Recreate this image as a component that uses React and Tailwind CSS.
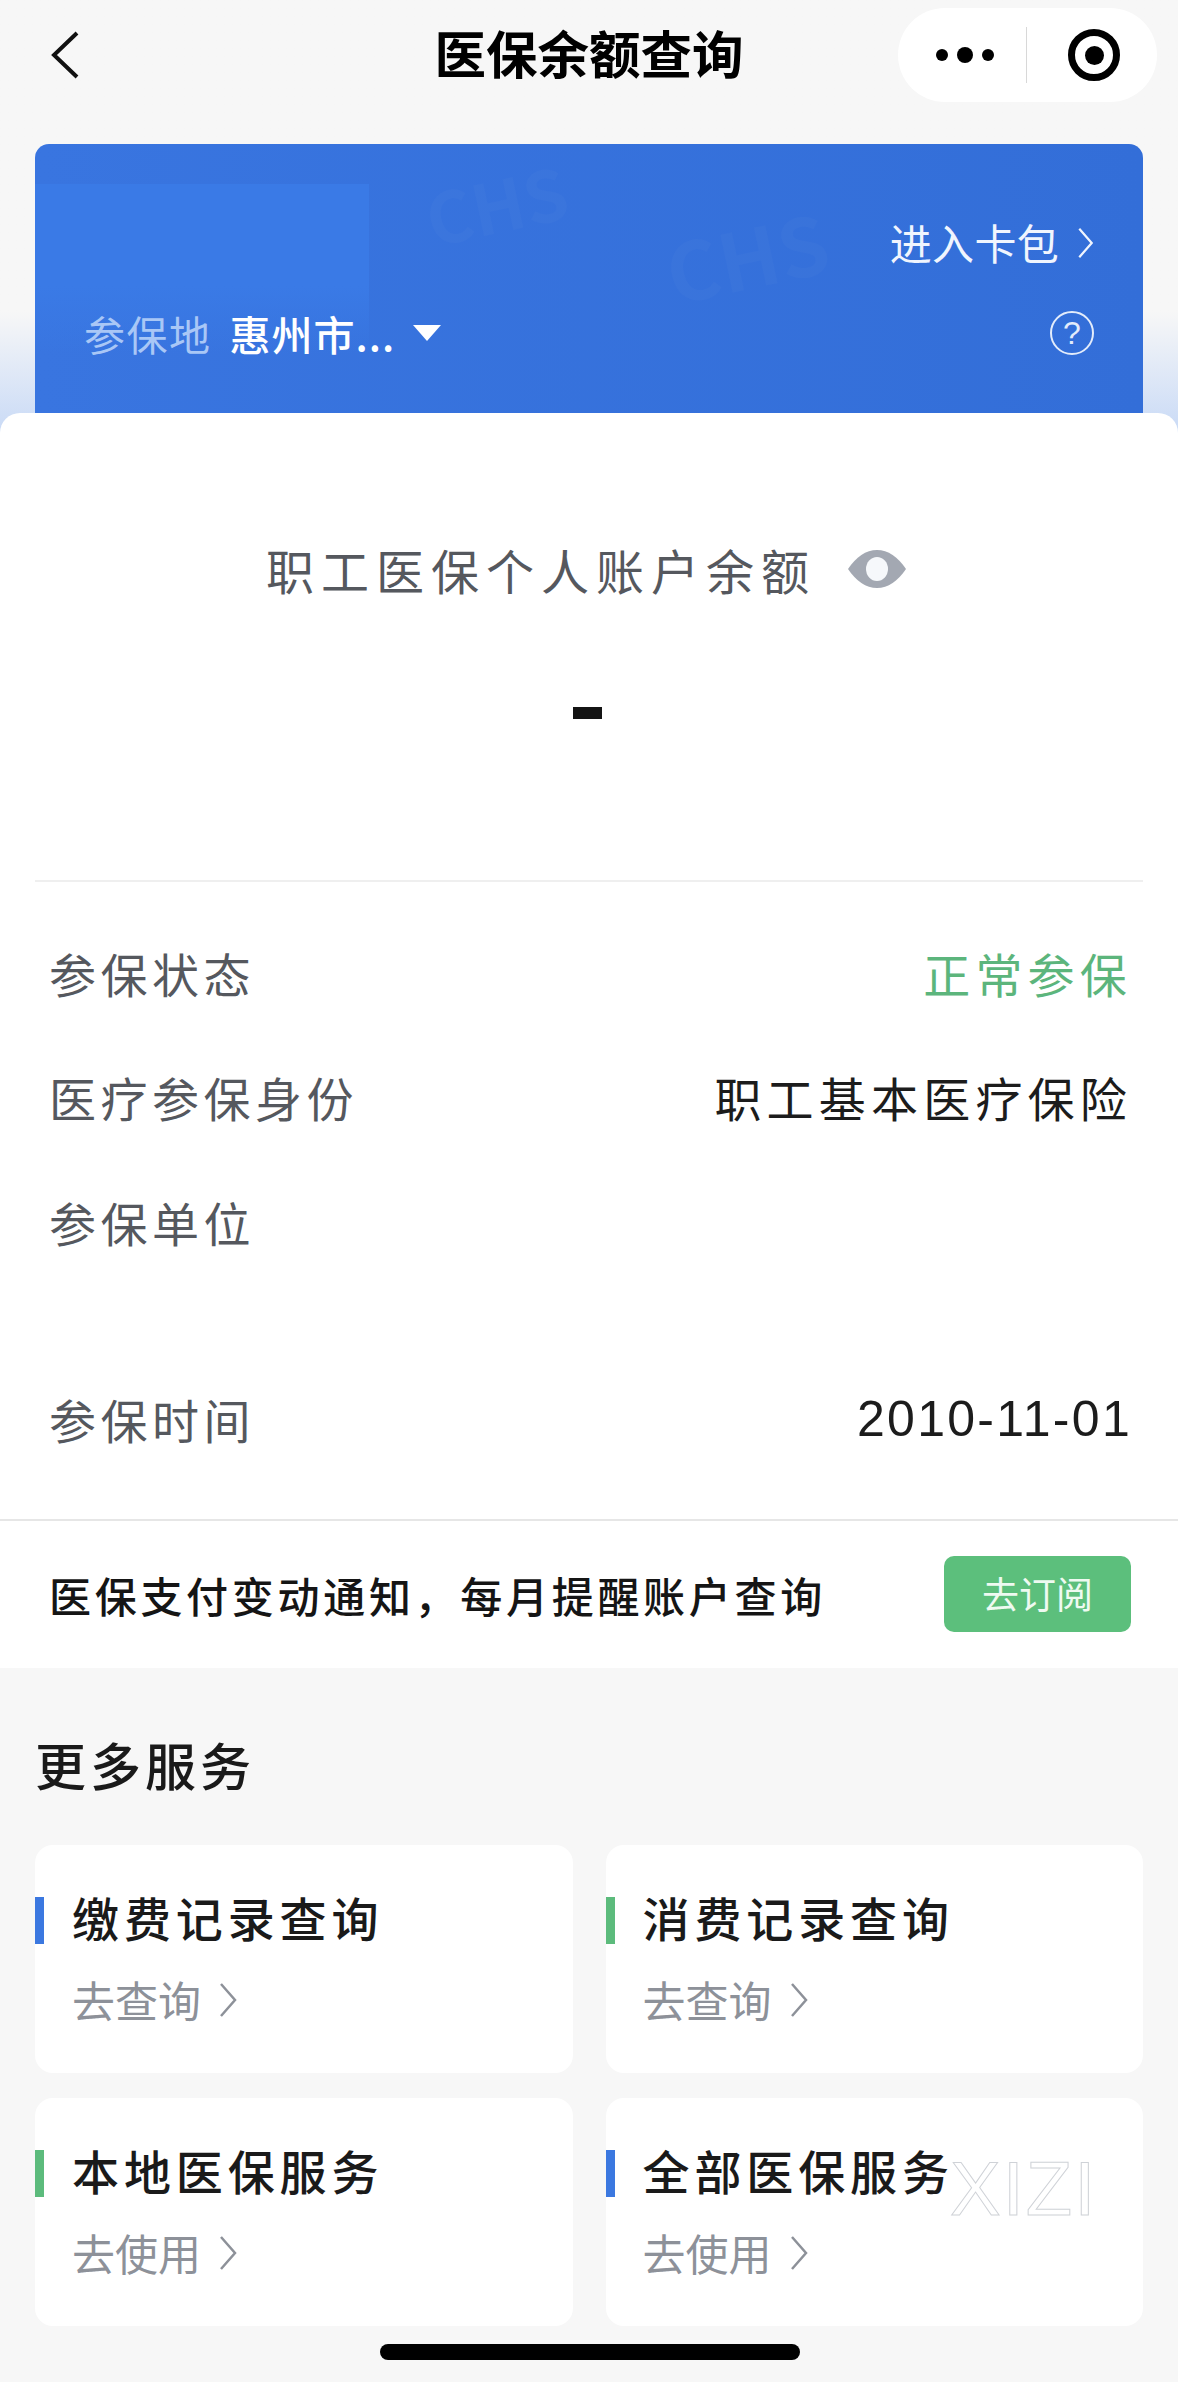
const cjk = "font-['Noto_Sans_CJK_SC','Noto_Sans',sans-serif]";

const infoRows = [
  { label: "参保状态", value: "正常参保", valueClass: "text-[#5cb57c] tracking-[5.2px]", height: "h-[123px]" },
  { label: "医疗参保身份", value: "职工基本医疗保险", valueClass: "text-[#1c1c1c] tracking-[5.2px]", height: "h-[125px]" },
  { label: "参保单位", value: "", valueClass: "", height: "h-[197px] pb-[72px]" },
  { label: "参保时间", value: "2010-11-01", valueClass: "text-[#1c1c1c] font-['Liberation_Sans',sans-serif] text-[50px] tracking-[2.3px]", height: "h-[125px]" },
];

const services = [
  { title: "缴费记录查询", action: "去查询", bar: "bg-[#3b78e0]" },
  { title: "消费记录查询", action: "去查询", bar: "bg-[#5cbb7c]" },
  { title: "本地医保服务", action: "去使用", bar: "bg-[#5cbb7c]" },
  { title: "全部医保服务", action: "去使用", bar: "bg-[#3b78e0]" },
];

function BackIcon() {
  return (
    <svg className="h-[48px] w-[30px]" viewBox="0 0 30 48" fill="none">
      <path d="M27 2 4 24l23 22" stroke="#111" strokeWidth="4" />
    </svg>
  );
}

function ThinChevron({ className, color }) {
  return (
    <svg className={className} viewBox="0 0 18 36" fill="none">
      <path d="M2 2l14 16L2 34" stroke={color} strokeWidth="2.5" />
    </svg>
  );
}

function Capsule() {
  return (
    <div className="flex h-[94px] w-[259px] items-center rounded-[47px] bg-white pl-[38px]">
      <div className="flex w-[58px] items-center justify-between">
        <span className="h-[12px] w-[12px] rounded-full bg-black" />
        <span className="h-[16px] w-[16px] rounded-full bg-black" />
        <span className="h-[12px] w-[12px] rounded-full bg-black" />
      </div>
      <span className="ml-[32px] h-[56px] w-px bg-[#d8d8d8]" />
      <span className="ml-[41px] flex h-[52px] w-[52px] items-center justify-center rounded-full border-[7px] border-black">
        <span className="h-[19px] w-[19px] rounded-full bg-black" />
      </span>
    </div>
  );
}

function HelpIcon() {
  return (
    <span className="flex h-[44px] w-[44px] items-center justify-center rounded-full border-2 border-[#e3ecfb] text-[32px] leading-none text-[#e3ecfb] font-['Liberation_Sans',sans-serif]">
      ?
    </span>
  );
}

function EyeIcon() {
  return (
    <svg className="h-[38px] w-[58px]" viewBox="0 0 58 38">
      <path d="M0 19C8 7 18 0 29 0s21 7 29 19c-8 12-18 19-29 19S8 31 0 19Z" fill="#a3a8b2" />
      <ellipse cx="29" cy="19" rx="11" ry="12" fill="#f6f8fb" />
    </svg>
  );
}

function InfoRow({ label, value, valueClass, height }) {
  return (
    <div className={`flex items-center justify-between pl-[49px] pr-[46px] text-[47px] tracking-[4.5px] ${height}`}>
      <span className="text-[#55585e]">{label}</span>
      {value && <span className={valueClass}>{value}</span>}
    </div>
  );
}

function ServiceCard({ title, action, bar }) {
  return (
    <div className="h-[228px] rounded-[18px] bg-white pt-[52px]">
      <div className="flex h-[47px] items-center">
        <span className={`h-[47px] w-[9px] ${bar}`} />
        <span className="mb-[9px] ml-[28px] text-[47px] font-medium leading-none tracking-[4.9px] text-[#1a1a1a]">{title}</span>
      </div>
      <div className="mt-[34px] flex items-center pl-[37px] text-[#8d9199]">
        <span className="text-[43px] leading-none">{action}</span>
        <ThinChevron className="ml-[18px] h-[36px] w-[18px]" color="#8d9199" />
      </div>
    </div>
  );
}

export default function App() {
  return (
    <div className={`relative min-h-[2382px] w-[1178px] overflow-hidden bg-[#f7f7f7] ${cjk}`}>
      <div className="bg-linear-to-b from-[#f7f7f7] from-[72%] to-[#c9daf6]">
        <header className="relative flex h-[144px] items-start justify-between pl-[50px] pr-[21px]">
          <div className="pt-[31px]">
            <BackIcon />
          </div>
          <h1 className="absolute inset-x-0 top-[22px] text-center text-[51.5px] font-bold leading-[60px] text-black">
            医保余额查询
          </h1>
          <div className="pt-[8px]">
            <Capsule />
          </div>
        </header>

        <section className="relative mx-[35px] h-[289px] overflow-hidden rounded-t-[14px] bg-linear-to-r from-[#3975e0] to-[#336ed8] text-white">
          <div className="absolute left-0 top-[40px] h-[170px] w-[334px] bg-linear-to-b from-[#3a7ae6] from-[60%] to-transparent" />
          <span className="absolute left-[390px] top-[24px] -rotate-12 text-[70px] font-bold leading-none text-white/[0.025]">CHS</span>
          <span className="absolute left-[630px] top-[70px] -rotate-12 text-[80px] font-bold leading-none text-white/[0.025]">CHS</span>
          <div className="relative flex h-[124px] items-end justify-end pr-[49px] pb-[1px] text-[42px] leading-[50px] tracking-[0.3px] text-[#f0f5fe]">
            <span>进入卡包</span>
            <ThinChevron className="mb-[8px] ml-[18px] h-[32px] w-[17px]" color="#f0f5fe" />
          </div>
          <div className="relative mt-[40px] flex h-[50px] items-center pl-[49px] pr-[49px]">
            <span className="text-[41px] leading-none tracking-[1.5px] text-[#a9c7f6]">参保地</span>
            <span className="ml-[18px] text-[41px] font-medium leading-none tracking-[1px]">惠州市...</span>
            <span className="ml-[18px] h-0 w-0 border-x-[14px] border-t-[16px] border-x-transparent border-t-white" />
            <span className="ml-auto">
              <HelpIcon />
            </span>
          </div>
        </section>
      </div>

      <main className="relative -mt-[20px] rounded-t-[20px] bg-white">
        <div className="h-[467px]">
          <div className="flex items-center justify-center pt-[128px]">
            <span className="ml-[-6px] text-[48px] leading-[56px] tracking-[7px] text-[#55585e]">职工医保个人账户余额</span>
            <span className="ml-[32px]">
              <EyeIcon />
            </span>
          </div>
          <div className="ml-[573px] mt-[110px] h-[12px] w-[29px] bg-[#141414]" />
        </div>
        <div className="mx-[35px] h-[2px] bg-[#efefef]" />

        <div className="pt-[30px]">
          {infoRows.map((row) => (
            <InfoRow key={row.label} {...row} />
          ))}
        </div>

        <div className="mt-[37px] h-[2px] bg-[#e6e6e6]" />

        <div className="flex h-[147px] items-center justify-between pl-[49px] pr-[47px]">
          <span className="text-[42px] font-medium tracking-[3.7px] text-[#151515]">医保支付变动通知，每月提醒账户查询</span>
          <button className="mb-[2px] flex h-[76px] w-[187px] items-center justify-center rounded-[10px] bg-[#5cbf7c] text-[37px] text-[#eefaf1]">
            去订阅
          </button>
        </div>
      </main>

      <section className="px-[35px] pt-[66px]">
        <h2 className="text-[51px] font-medium leading-[60px] tracking-[4px] text-[#1a1a1a]">更多服务</h2>
        <div className="mt-[51px] grid grid-cols-2 gap-x-[33px] gap-y-[25px]">
          {services.map((item) => (
            <ServiceCard key={item.title} {...item} />
          ))}
        </div>
      </section>

      <span className="absolute left-[950px] top-[2149px] font-['Liberation_Sans',sans-serif] text-[76px] leading-[80px] tracking-[2px] text-transparent [-webkit-text-stroke:1px_#cfd2d7]">
        XIZI
      </span>

      <div className="absolute bottom-[22px] left-[380px] h-[16px] w-[420px] rounded-full bg-black" />
    </div>
  );
}
